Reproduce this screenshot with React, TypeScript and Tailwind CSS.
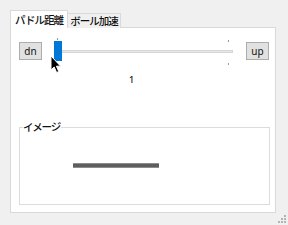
import React from "react";

const jp = { fontFamily: '"Noto Sans CJK JP", "Noto Sans", sans-serif' };
const ui = { fontFamily: '"Noto Sans", "Liberation Sans", sans-serif' };

function Button({ label }: { label: string }) {
  return (
    <div
      className="flex h-[18px] w-[23px] items-center justify-center border border-[#adadad] bg-[#e1e1e1] pb-px text-[10px] leading-none text-[#111]"
      style={ui}
    >
      {label}
    </div>
  );
}

function Cursor() {
  return (
    <svg width="12" height="19" viewBox="0 0 12 19" className="absolute left-[-2px] top-[18px]">
      <path d="M1 1 L1 15 L4.2 12 L6.6 17.5 L8.8 16.5 L6.4 11.2 L10.6 11.2 Z" fill="#000" stroke="#fff" strokeWidth="1" strokeLinejoin="round" />
    </svg>
  );
}

function Slider() {
  return (
    <div className="relative h-[28px] w-[184px]">
      {/* track */}
      <div className="absolute left-[8px] right-[3px] top-[13px] h-[3px] border border-[#d6d6d6] bg-[#e7e7e7]" />
      {/* ticks */}
      <div className="absolute left-[5px] top-[1px] h-[2px] w-px bg-[#9a9a9a]" />
      <div className="absolute left-[176px] top-[3px] h-[2px] w-px bg-[#9a9a9a]" />
      <div className="absolute left-[176px] top-[26px] h-[2px] w-px bg-[#9a9a9a]" />
      {/* thumb */}
      <div className="absolute left-[2px] top-[4px] h-[20px] w-[8px] bg-[#0078d7]" />
      <Cursor />
    </div>
  );
}

export default function App() {
  return (
    <div className="relative h-[225px] w-[288px] overflow-hidden bg-[#f0f0f0] pl-[10px] pt-[10px]">
      {/* tabs */}
      <div className="flex h-[18px] items-end">
        <div
          className="relative z-10 flex h-[18px] w-[58px] items-center justify-center border border-b-0 border-[#d9d9d9] bg-white text-[10.5px] font-medium tracking-[-1px] text-[#111]"
          style={jp}
        >
          パドル距離
        </div>
        <div
          className="flex h-[15px] w-[53px] items-center justify-center border border-b-0 border-l-0 border-[#d9d9d9] bg-[#f0f0f0] text-[10.5px] font-medium tracking-[-1px] text-[#111]"
          style={jp}
        >
          ボール加速
        </div>
      </div>

      {/* page */}
      <div className="-mt-px h-[186px] w-[266px] border border-[#d9d9d9] bg-white">
        <div className="flex items-center pl-[8px] pt-[9px]">
          <Button label="dn" />
          <div className="ml-[10px]">
            <Slider />
          </div>
          <div className="ml-[10px]">
            <Button label="up" />
          </div>
        </div>

        <div className="pl-[118px] pt-[10px] text-[9px] font-medium leading-[10px] text-[#111]" style={ui}>
          1
        </div>

        {/* group box */}
        <div className="relative ml-[8px] mt-[42px] h-[78px] w-[251px] border border-[#dcdcdc]">
          <div
            className="absolute left-[3px] top-[-8px] bg-white pr-[1px] text-[10.5px] font-medium leading-[14px] tracking-[-1.2px] text-[#111]"
            style={jp}
          >
            イメージ
          </div>
          <div className="ml-[53px] mt-[35px] h-[5px] w-[86px] border-y border-[#8c8c8c] bg-[#5e5e5e]" />
        </div>
      </div>

      {/* size grip */}
      <div className="absolute bottom-[2px] right-[2px] grid grid-cols-3 gap-px">
        <span className="h-[2px] w-[2px]" />
        <span className="h-[2px] w-[2px]" />
        <span className="h-[2px] w-[2px] bg-[#b4b4b4]" />
        <span className="h-[2px] w-[2px]" />
        <span className="h-[2px] w-[2px] bg-[#b4b4b4]" />
        <span className="h-[2px] w-[2px] bg-[#b4b4b4]" />
        <span className="h-[2px] w-[2px] bg-[#b4b4b4]" />
        <span className="h-[2px] w-[2px] bg-[#b4b4b4]" />
        <span className="h-[2px] w-[2px] bg-[#b4b4b4]" />
      </div>
    </div>
  );
}
